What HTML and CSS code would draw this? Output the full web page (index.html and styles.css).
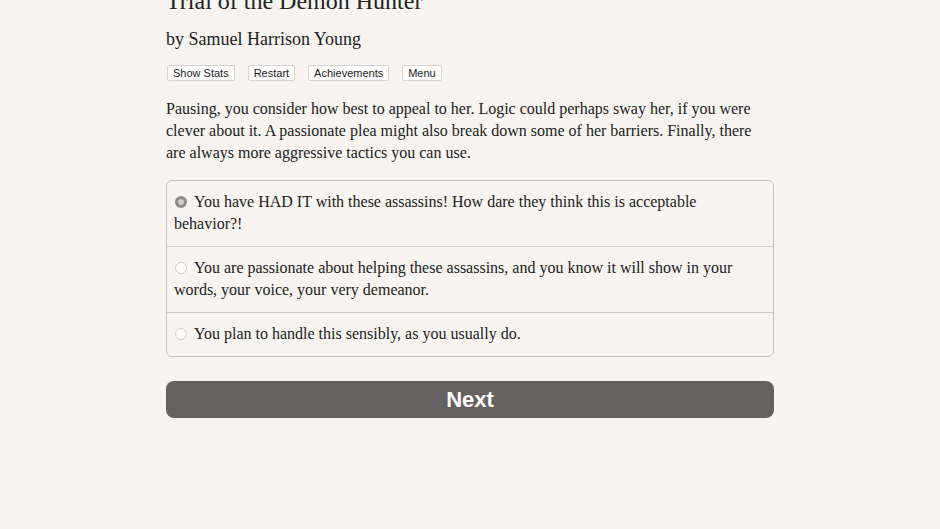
FILE: index.html
```html
<!DOCTYPE html>
<html>
<head>
<meta charset="utf-8">
<link rel="stylesheet" href="styles.css">
</head>
<body>
<div class="page">
  <h1 class="title">Trial of the Demon Hunter</h1>
  <h2 class="author">by Samuel Harrison Young</h2>
  <div class="buttons">
    <button class="btn">Show Stats</button>
    <button class="btn">Restart</button>
    <button class="btn">Achievements</button>
    <button class="btn">Menu</button>
  </div>
  <p class="story">Pausing, you consider how best to appeal to her. Logic could perhaps sway her, if you were clever about it. A passionate plea might also break down some of her barriers. Finally, there are always more aggressive tactics you can use.</p>
  <div class="choices">
    <div class="choice"><span class="radio checked"></span>You have HAD IT with these assassins! How dare they think this is acceptable behavior?!</div>
    <div class="choice"><span class="radio"></span>You are passionate about helping these assassins, and you know it will show in your words, your voice, your very demeanor.</div>
    <div class="choice"><span class="radio"></span>You plan to handle this sensibly, as you usually do.</div>
  </div>
  <button class="next">Next</button>
</div>
</body>
</html>
```
FILE: styles.css
```css
html, body {
  margin: 0;
  padding: 0;
  background: #f7f4f1;
}
body {
  font-family: "Liberation Serif", "Times New Roman", serif;
  color: #222222;
}
.page {
  width: 608px;
  margin: 0 0 0 166px;
}
.title {
  font-size: 24px;
  font-weight: normal;
  margin: -14px 0 0 0;
  line-height: 30px;
}
.author {
  font-size: 18px;
  font-weight: normal;
  margin: 12px 0 0 0;
  line-height: 22px;
}
.buttons {
  display: flex;
  gap: 13px;
  margin-top: 15px;
  padding-left: 1px;
}
.btn {
  font-family: "Liberation Sans", Arial, sans-serif;
  font-size: 11px;
  height: 16px;
  line-height: 14px;
  padding: 0 5px;
  background: #ffffff;
  border: 1px solid #d6d3d0;
  border-radius: 2px;
  color: #222;
}
.story {
  font-size: 16px;
  line-height: 22px;
  margin: 17px 0 0 0;
}
.choices {
  margin-top: 16px;
  border: 1px solid #c4c0bc;
  border-radius: 6px;
}
.choice {
  font-size: 16px;
  line-height: 22px;
  padding: 10px 10px 11px 7px;
  border-top: 1px solid #cfcbc7;
}
.choice:first-child {
  border-top: none;
}
.radio {
  display: inline-block;
  width: 12px;
  height: 12px;
  border-radius: 50%;
  border: 1px solid #cfcbc7;
  background: #fff;
  margin: 0 7px 0 1px;
  vertical-align: -1px;
  box-sizing: border-box;
}
.radio.checked {
  border: 3px solid #8d8b89;
  background: #cfcdcb;
}
.next {
  display: block;
  width: 100%;
  height: 37px;
  margin-top: 24px;
  background: #646260;
  border: none;
  border-radius: 8px;
  color: #fff;
  font-family: "Liberation Sans", Arial, sans-serif;
  font-weight: bold;
  font-size: 22px;
}
```
